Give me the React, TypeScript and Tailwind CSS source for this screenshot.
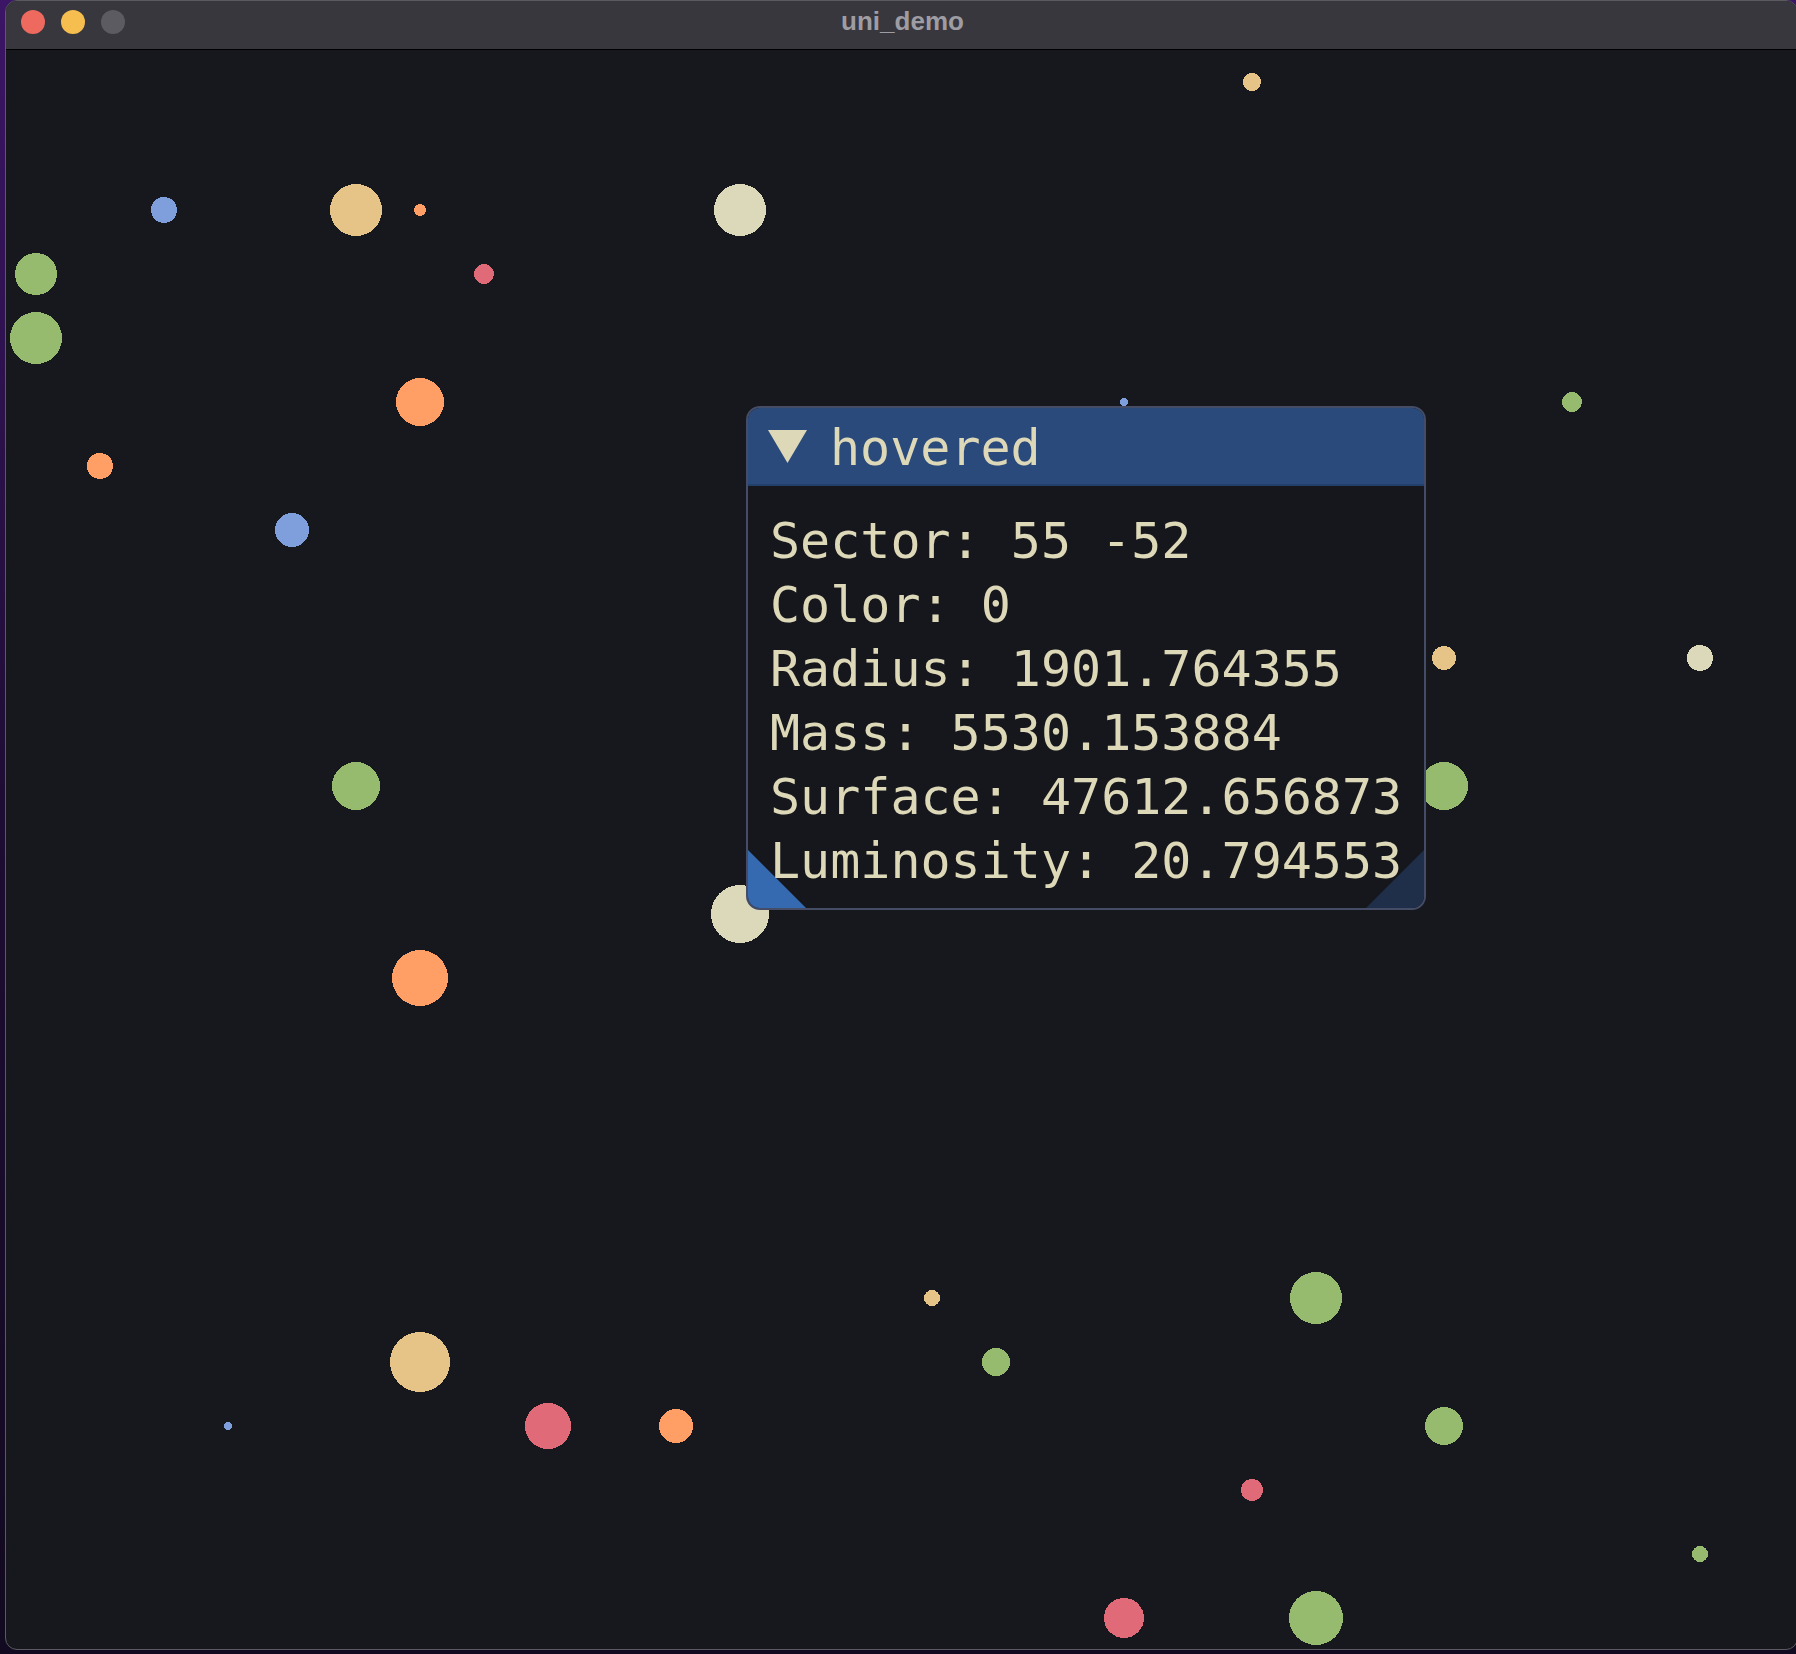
const BLUE = "#7f9fdc";
const TAN = "#e6c487";
const ORANGE = "#ff9f66";
const CREAM = "#dcd8ba";
const RED = "#e06a77";
const GREEN = "#97bb6e";

// bodies in page coordinates: [cx, cy, r, colour]
const bodies: [number, number, number, string][] = [
  [1252, 82, 9, TAN],
  [164, 210, 13, BLUE],
  [356, 210, 26, TAN],
  [420, 210, 6, ORANGE],
  [740, 210, 26, CREAM],
  [36, 274, 21, GREEN],
  [484, 274, 10, RED],
  [36, 338, 26, GREEN],
  [420, 402, 24, ORANGE],
  [1124, 402, 4, BLUE],
  [1572, 402, 10, GREEN],
  [100, 466, 13, ORANGE],
  [292, 530, 17, BLUE],
  [1444, 658, 12, TAN],
  [1700, 658, 13, CREAM],
  [356, 786, 24, GREEN],
  [1444, 786, 24, GREEN],
  [740, 914, 29, CREAM],
  [420, 978, 28, ORANGE],
  [932, 1298, 8, TAN],
  [1316, 1298, 26, GREEN],
  [420, 1362, 30, TAN],
  [996, 1362, 14, GREEN],
  [228, 1426, 4, BLUE],
  [548, 1426, 23, RED],
  [676, 1426, 17, ORANGE],
  [1444, 1426, 19, GREEN],
  [1252, 1490, 11, RED],
  [1700, 1554, 8, GREEN],
  [1124, 1618, 20, RED],
  [1316, 1618, 27, GREEN],
];

const stats = [
  "Sector: 55 -52",
  "Color: 0",
  "Radius: 1901.764355",
  "Mass: 5530.153884",
  "Surface: 47612.656873",
  "Luminosity: 20.794553",
];

const TitleBar = () => (
  <div className="relative flex h-[49px] shrink-0 items-center border-b border-black bg-[#38373d] pb-[6px] pl-[15px]">
    <div className="flex gap-[16px]">
      <span className="h-[24px] w-[24px] rounded-full bg-[#ee6a5f]" />
      <span className="h-[24px] w-[24px] rounded-full bg-[#f5be4f]" />
      <span className="h-[24px] w-[24px] rounded-full bg-[#5c5b61]" />
    </div>
    <div className="absolute inset-0 flex items-center justify-center pl-[2px] pb-[7px] font-['Liberation_Sans',sans-serif] text-[26px] font-bold text-[#9e9da3]">
      uni_demo
    </div>
  </div>
);

const HoveredPanel = () => (
  <div className="absolute left-[740px] top-[356px] flex h-[504px] w-[680px] flex-col overflow-hidden rounded-[14px] border-2 border-[#454d66] bg-[#16171c] font-['DejaVu_Sans_Mono',monospace] text-[50px] text-[#ddd8b8]">
    <div className="flex h-[78px] shrink-0 items-center border-b-2 border-[#23406b] bg-[#2a4a7b] pl-[20px]">
      <svg width="39" height="33" viewBox="0 0 39 33" className="shrink-0">
        <polygon points="0,0 39,0 19.5,33" fill="#ddd8b8" />
      </svg>
      <span className="ml-[23px] pt-[3px] leading-none">hovered</span>
    </div>
    <div className="relative flex-1">
      <svg width="58" height="58" viewBox="0 0 58 58" className="absolute bottom-0 left-0">
        <polygon points="0,0 0,58 58,58" fill="#3569b0" />
      </svg>
      <svg width="58" height="58" viewBox="0 0 58 58" className="absolute bottom-0 right-0">
        <polygon points="58,0 58,58 0,58" fill="#1f2e49" />
      </svg>
      <div className="relative flex flex-col pl-[22px] pt-[23px] leading-[64px]">
        {stats.map((s) => (
          <div key={s} className="whitespace-pre">{s}</div>
        ))}
      </div>
    </div>
  </div>
);

export default function App() {
  return (
    <div className="h-[1654px] w-[1796px] overflow-hidden bg-gradient-to-b from-[#3c1566] via-[#1d0c33] to-[#120a20]">
      <div className="ml-[5px] flex h-[1650px] w-[1793px] flex-col overflow-hidden rounded-[12px] border border-[#5a5a5f] bg-[#17181d]">
        <TitleBar />
        <div className="relative flex-1">
          <svg width="1791" height="1600" viewBox="6 50 1791 1600" shapeRendering="crispEdges" className="block">
            {bodies.map(([cx, cy, r, c], i) => (
              <circle key={i} cx={cx} cy={cy} r={r} fill={c} />
            ))}
          </svg>
          <HoveredPanel />
        </div>
      </div>
    </div>
  );
}
